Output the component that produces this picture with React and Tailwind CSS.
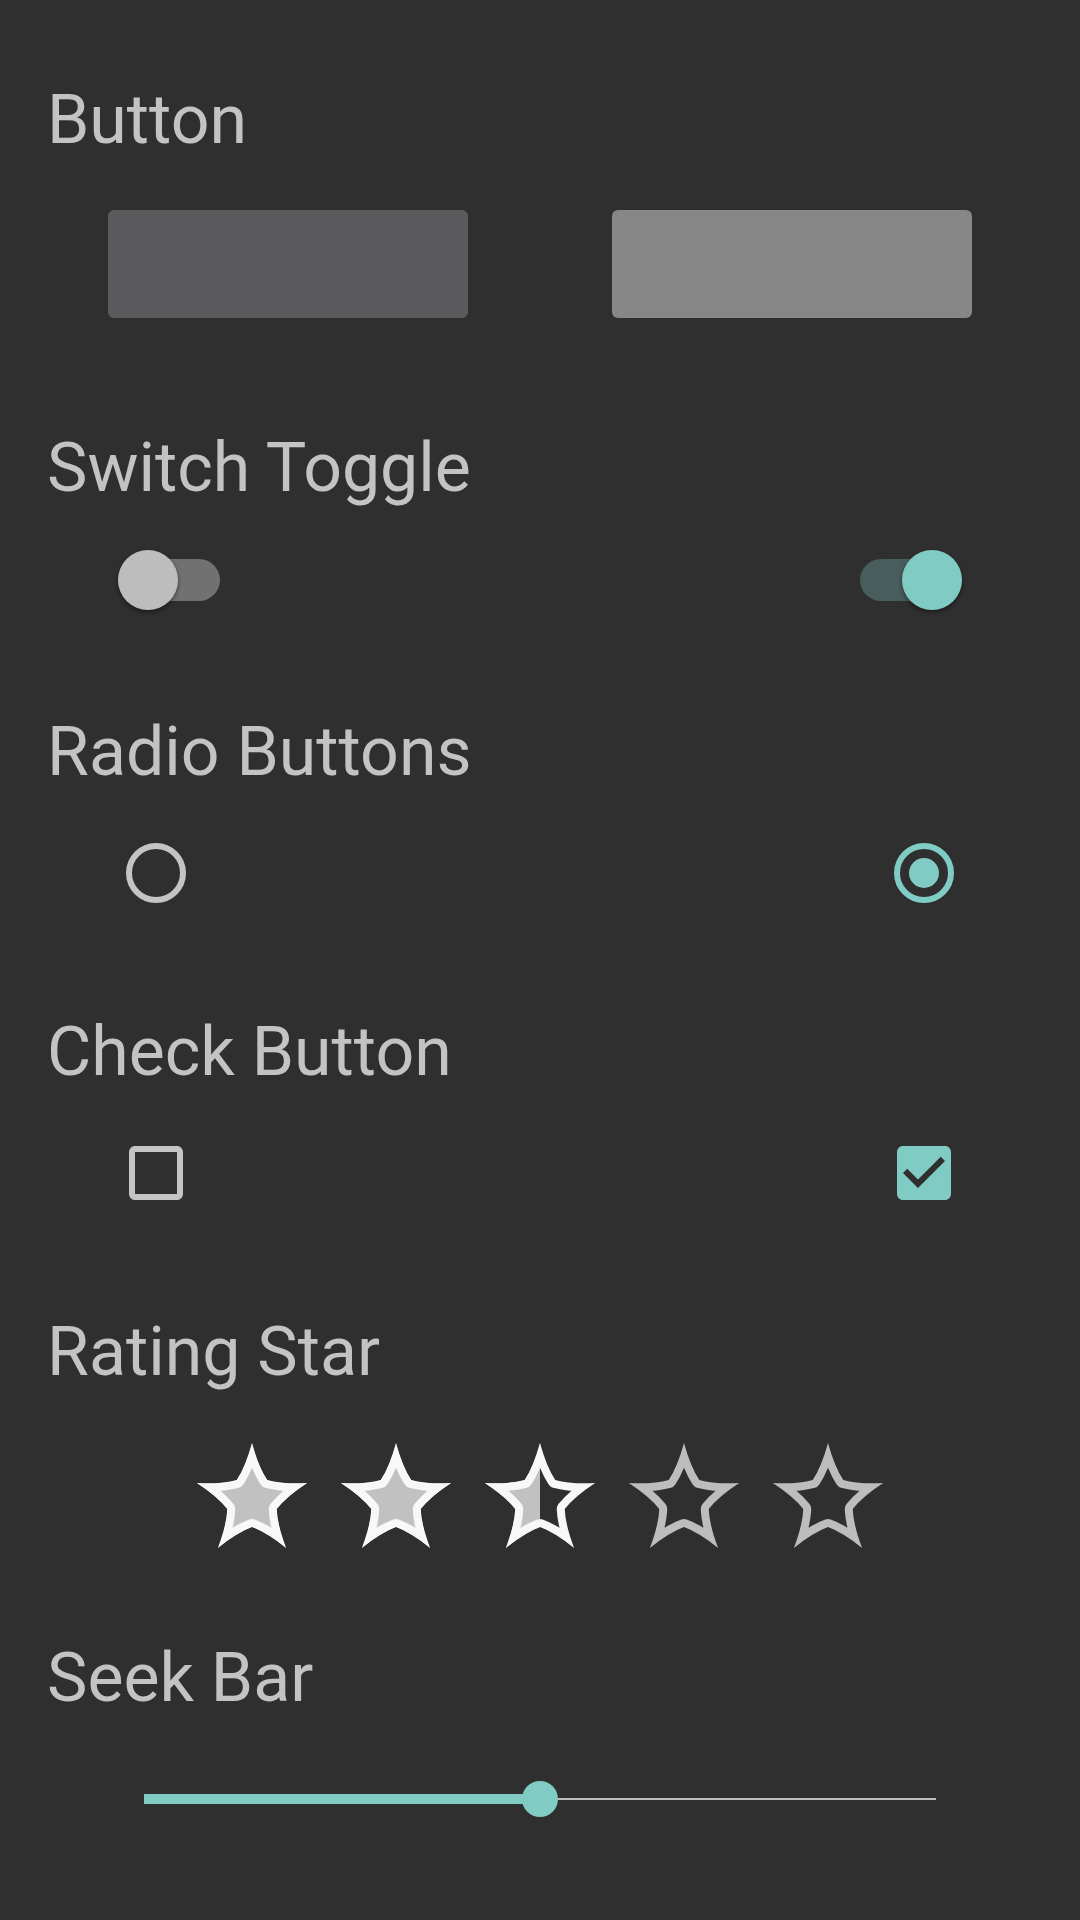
import React from 'react';

// 5-point star, slightly concave edges, in a 116x108 box
const STAR = (() => {
  const cx = 58, cy = 59, R = 58, r = 26;
  const pts = [];
  for (let i = 0; i < 10; i++) {
    const a = (-90 + i * 36) * Math.PI / 180;
    const rad = i % 2 === 0 ? R : r;
    pts.push([cx + rad * Math.cos(a), cy + rad * Math.sin(a)]);
  }
  let d = `M${pts[0][0].toFixed(2)} ${pts[0][1].toFixed(2)}`;
  for (let i = 1; i <= 10; i++) {
    const p = pts[(i - 1) % 10];
    const q = pts[i % 10];
    const mx = (p[0] + q[0]) / 2, my = (p[1] + q[1]) / 2;
    const c = [mx + (cx - mx) * 0.14, my + (cy - my) * 0.14];
    d += ` Q${c[0].toFixed(2)} ${c[1].toFixed(2)} ${q[0].toFixed(2)} ${q[1].toFixed(2)}`;
  }
  return d + 'Z';
})();

function Heading({ children, className = '' }) {
  return (
    <h2 className={`text-[68px] leading-[66px] text-[#c3c3c3] font-normal ${className}`}>
      {children}
    </h2>
  );
}

function Switch({ on }) {
  return (
    <div className="relative w-[102px] h-[60px] flex items-center">
      <div className={`w-[102px] h-[42px] rounded-full ${on ? 'bg-[#485e5c]' : 'bg-[#717171]'}`} />
      <div
        className={`absolute top-0 w-[60px] h-[60px] rounded-full shadow-[0_2px_4px_rgba(0,0,0,0.45)] ${
          on ? 'right-0 bg-[#80cbc4]' : 'left-0 bg-[#bdbdbd]'
        }`}
      />
    </div>
  );
}

function Radio({ on }) {
  const color = on ? '#80cbc4' : '#c4c4c4';
  return (
    <svg width="72" height="72" viewBox="0 0 24 24">
      <circle cx="12" cy="12" r="9" fill="none" stroke={color} strokeWidth="2" />
      {on && <circle cx="12" cy="12" r="5" fill={color} />}
    </svg>
  );
}

function Check({ on }) {
  if (on) {
    return (
      <svg width="72" height="72" viewBox="0 0 24 24">
        <path
          fill="#80cbc4"
          fillRule="evenodd"
          d="M19 3H5c-1.11 0-2 .9-2 2v14c0 1.1.89 2 2 2h14c1.11 0 2-.9 2-2V5c0-1.1-.89-2-2-2zm-9 14l-5-5 1.41-1.41L10 14.17l7.59-7.59L19 8l-9 9z"
        />
      </svg>
    );
  }
  return (
    <svg width="72" height="72" viewBox="0 0 24 24">
      <path
        fill="#c4c4c4"
        d="M19 5v14H5V5h14m0-2H5c-1.1 0-2 .9-2 2v14c0 1.1.9 2 2 2h14c1.1 0 2-.9 2-2V5c0-1.1-.9-2-2-2z"
      />
    </svg>
  );
}

function Star({ id, fill }) {
  const outline = fill === 'none' ? '#bdbdbd' : '#f8f8f8';
  return (
    <svg width="116" height="108" viewBox="0 0 116 108">
      <defs>
        <clipPath id={id}>
          <path d={STAR} />
        </clipPath>
      </defs>
      <g clipPath={`url(#${id})`}>
        {fill === 'full' && <path d={STAR} fill="#c1c1c1" />}
        {fill === 'half' && <rect x="0" y="0" width="58" height="108" fill="#c1c1c1" />}
        <path d={STAR} fill="none" stroke={outline} strokeWidth="16" strokeLinejoin="round" />
      </g>
    </svg>
  );
}

export default function App() {
  const stars = ['full', 'full', 'half', 'none', 'none'];
  return (
    <div className="w-[1080px] h-[1920px] bg-[#2f2f2f] flex flex-col pt-[87px] font-['Roboto',sans-serif]">
      <Heading className="pl-[47px]">Button</Heading>
      <div className="mt-[57px] flex justify-center gap-[144px]">
        <div className="w-[360px] h-[108px] rounded-md bg-[#5a5a5c]" />
        <div className="w-[360px] h-[108px] rounded-md bg-[#878787]" />
      </div>

      <Heading className="pl-[47px] mt-[117px]">Switch Toggle</Heading>
      <div className="mt-[49px] flex justify-between px-[118px]">
        <Switch on={false} />
        <Switch on />
      </div>

      <Heading className="pl-[47px] mt-[109px]">Radio Buttons</Heading>
      <div className="mt-[52px] flex justify-between px-[120px]">
        <Radio on={false} />
        <Radio on />
      </div>

      <Heading className="pl-[47px] mt-[110px]">Check Button</Heading>
      <div className="mt-[52px] flex justify-between px-[120px]">
        <Check on={false} />
        <Check on />
      </div>

      <Heading className="pl-[47px] mt-[110px]">Rating Star</Heading>
      <div className="mt-[57px] flex justify-center gap-[28px]">
        {stars.map((f, i) => (
          <Star key={i} id={`star-${i}`} fill={f} />
        ))}
      </div>

      <Heading className="pl-[47px] mt-[95px]">Seek Bar</Heading>
      <div className="mt-[70px] px-[144px]">
        <div className="relative h-[36px] flex items-center">
          <div className="w-1/2 h-[10px] bg-[#80cbc4]" />
          <div className="flex-1 h-[2px] bg-[#bdbdbd]" />
          <div className="absolute left-1/2 top-0 -translate-x-1/2 w-[36px] h-[36px] rounded-full bg-[#80cbc4]" />
        </div>
      </div>
    </div>
  );
}
